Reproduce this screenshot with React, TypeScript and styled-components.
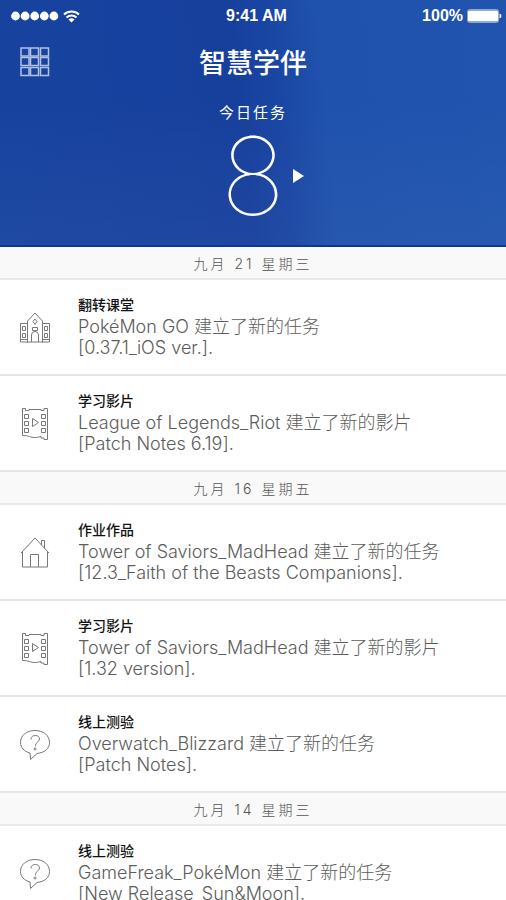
import React from "react";
import styled, { createGlobalStyle } from "styled-components";

const GlobalStyle = createGlobalStyle`
  * { box-sizing: border-box; }
  body {
    margin: 0;
    background: #fff;
    font-family: Inter, "Noto Sans CJK SC", sans-serif;
  }
`;

const Hero = styled.header`
  display: flex;
  flex-direction: column;
  padding-bottom: 16px;
  color: #fff;
  background:
    linear-gradient(180deg, rgba(255, 255, 255, 0) 40%, rgba(255, 255, 255, 0.035) 100%),
    linear-gradient(84deg, #17439f 0%, #17409d 48%, #1a47a4 56%, #1f52ad 64%, #2054ae 100%);
  border-bottom: 2px solid #0f3696;
`;

const StatusBar = styled.div`
  display: grid;
  grid-template-columns: 1fr auto 1fr;
  align-items: center;
  height: 32px;
  padding: 0 4px 0 11px;
  font: 700 16px/20px "Liberation Sans", Arial, sans-serif;
`;

const StatusSide = styled.div<{ $end?: boolean }>`
  display: flex;
  align-items: center;
  gap: 4px;
  justify-content: ${(p) => (p.$end ? "flex-end" : "flex-start")};
`;

const TitleBar = styled.div`
  display: grid;
  grid-template-columns: 1fr auto 1fr;
  align-items: center;
  height: 60px;
  padding: 0 20px;
`;

const Title = styled.h1`
  margin: 0;
  font: 500 27px/40px "Noto Sans CJK SC", sans-serif;
`;

const IconButton = styled.button`
  display: flex;
  padding: 0;
  border: 0;
  color: inherit;
  background: none;
  cursor: pointer;
  justify-self: start;
`;

const Caption = styled.p`
  margin: 9px 0 0;
  text-align: center;
  font: 400 15px/22px "Noto Sans CJK SC", sans-serif;
  letter-spacing: 2px;
`;

const Counter = styled.div`
  display: grid;
  grid-template-columns: 1fr auto 1fr;
  align-items: center;
  column-gap: 8px;
`;

const Count = styled.strong`
  grid-column: 2;
  font: 100 108px/106px Inter, sans-serif;
`;

const DateBand = styled.h2`
  height: 33px;
  margin: 0;
  text-align: center;
  color: #555;
  background: #f9f9f9;
  border-bottom: 2px solid #e9e9e9;
  font: 300 14px/33px Inter, "Noto Sans CJK SC", sans-serif;
  letter-spacing: 3px;
`;

const List = styled.ul`
  margin: 0;
  padding: 0;
  list-style: none;
`;

const Item = styled.li`
  border-bottom: 2px solid #e6e6e6;
`;

const Entry = styled.a`
  display: grid;
  grid-template-columns: 30px 1fr;
  column-gap: 28px;
  align-items: center;
  padding: 12px 20px 16px;
  color: #5c5c5c;
  text-decoration: none;
`;

const Kind = styled.div`
  color: #111;
  font: 500 14px/24px "Noto Sans CJK SC", sans-serif;
`;

const Message = styled.p`
  margin: 0;
  font: 300 18px/21px Inter, "Noto Sans CJK SC", sans-serif;
`;

const LineIcon = styled.svg`
  display: block;
  margin-top: 6px;
  fill: none;
  stroke: #777;
  stroke-width: 1;
`;

type IconName = "school" | "film" | "house" | "quiz";

const drawings: Record<IconName, React.ReactNode> = {
  school: (
    <>
      <path d="M7.500 30.500V9L15 1l7.500 8V30.500M.5 11.500h7M22.500 11.500h7M.5 11.500v18.500h29V11.500M1 27.500h6M23 27.500h6" />
      <path d="M11.500 30v-7a3.500 3.500 0 0 1 7 0v7M12.500 15.500h5v3h-5zM15 7l2 2.500-2 3-2-3z" />
      <path d="M2.500 14.500h3v4h-3zM2.500 21.500h3v4h-3zM24.500 14.500h3v4h-3zM24.500 21.500h3v4h-3z" />
    </>
  ),
  film: (
    <>
      <path d="M2.500.5v27c6-.5 8 2.500 13 2 3 0 4-1 5.500-1v1.500h3v1.500h3.500V.5h-3.500v2h-3v-1H9v1H5.500v-2z" />
      <path d="M4.500 6.500h4v4h-4zM4.500 13.500h4v4h-4zM4.500 20.500h4v4h-4zM21.500 6.500h4v4h-4zM21.500 13.500h4v4h-4zM21.500 20.500h4v4h-4z" />
      <path d="M12.500 10.500v8l6-4z" />
    </>
  ),
  house: (
    <>
      <path d="M1 16 15 1l14 15M2.500 14.500v15.500h25V14.500" />
      <path d="M10.500 30V17.500h8V30M21.500 8V3.500h3v7.500" />
    </>
  ),
  quiz: (
    <>
      <path d="M10 24C4 22.500.5 18.500.5 13.500.5 6.500 6.500 1.500 15 1.500s14.500 5 14.500 12c0 6-4.500 10-12.500 11l-6.500 6z" />
      <path d="M11 10.500c0-3 2-4 4.500-4 2.500 0 4 1.500 4 3.500 0 3-4 3-4 6.500v1" />
      <circle cx="15" cy="20" r="1" />
    </>
  ),
};

const groups: { date: string; items: { icon: IconName; kind: string; who: string; action: string; what: string }[] }[] = [
  {
    date: "九月 21 星期三",
    items: [
      { icon: "school", kind: "翻转课堂", who: "PokéMon GO", action: "建立了新的任务", what: "[0.37.1_iOS ver.]." },
      { icon: "film", kind: "学习影片", who: "League of Legends_Riot", action: "建立了新的影片", what: "[Patch Notes 6.19]." },
    ],
  },
  {
    date: "九月 16 星期五",
    items: [
      { icon: "house", kind: "作业作品", who: "Tower of Saviors_MadHead", action: "建立了新的任务", what: "[12.3_Faith of the Beasts Companions]." },
      { icon: "film", kind: "学习影片", who: "Tower of Saviors_MadHead", action: "建立了新的影片", what: "[1.32 version]." },
      { icon: "quiz", kind: "线上测验", who: "Overwatch_Blizzard", action: "建立了新的任务", what: "[Patch Notes]." },
    ],
  },
  {
    date: "九月 14 星期三",
    items: [
      { icon: "quiz", kind: "线上测验", who: "GameFreak_PokéMon", action: "建立了新的任务", what: "[New Release_Sun&Moon]." },
    ],
  },
];

export default function App() {
  return (
    <>
      <GlobalStyle />
      <Hero>
        <StatusBar>
          <StatusSide>
            <svg width="48" height="10" fill="#fff" aria-hidden="true">
              {[0, 1, 2, 3, 4].map((i) => (
                <circle key={i} cx={4.5 + i * 9.6} cy="5" r="4.400" />
              ))}
            </svg>
            <svg width="17" height="13" viewBox="0 0 17 13" fill="none" stroke="#fff" strokeWidth="2" aria-hidden="true">
              <path d="M1 4.500a11 11 0 0 1 15 0M3.500 7.500a7.500 7.500 0 0 1 10 0" />
              <path d="M8.500 12.500 5.500 9.500a4.500 4.500 0 0 1 6 0z" fill="#fff" stroke="none" />
            </svg>
          </StatusSide>
          <span>9:41 AM</span>
          <StatusSide $end>
            <span>100%</span>
            <svg width="35" height="14" viewBox="0 0 35 14" aria-hidden="true">
              <rect x=".5" y=".5" width="31" height="13" rx="2" fill="none" stroke="#8fa6d6" />
              <rect x="1" y="1.500" width="30" height="11" rx="1" fill="#fff" />
              <path d="M32.500 4.500c2.500 1 2.500 4 0 5z" fill="#fff" />
            </svg>
          </StatusSide>
        </StatusBar>
        <TitleBar>
          <IconButton aria-label="菜单">
            <svg width="30" height="30" viewBox="0 0 30 30" fill="none" stroke="#b4c1e4" strokeWidth="1.500" aria-hidden="true">
              {[1, 10.5, 20.5].map((y) =>
                [1, 10.5, 20.5].map((x) => <rect key={`${x}-${y}`} x={x} y={y} width="8" height="8" />)
              )}
            </svg>
          </IconButton>
          <Title>智慧学伴</Title>
        </TitleBar>
        <Caption>今日任务</Caption>
        <Counter>
          <Count>8</Count>
          <IconButton aria-label="查看今日任务">
            <svg width="11" height="14" viewBox="0 0 11 14" fill="#fff" aria-hidden="true">
              <path d="M0 0 11 7 0 14z" />
            </svg>
          </IconButton>
        </Counter>
      </Hero>
      <main>
        {groups.map((group) => (
          <section key={group.date}>
            <DateBand>{group.date}</DateBand>
            <List>
              {group.items.map((item) => (
                <Item key={item.kind + item.who}>
                  <Entry href="#">
                    <LineIcon width="30" height="32" viewBox="0 0 30 32" aria-hidden="true">
                      {drawings[item.icon]}
                    </LineIcon>
                    <div>
                      <Kind>{item.kind}</Kind>
                      <Message>
                        {item.who} {item.action}
                        <br />
                        {item.what}
                      </Message>
                    </div>
                  </Entry>
                </Item>
              ))}
            </List>
          </section>
        ))}
      </main>
    </>
  );
}
